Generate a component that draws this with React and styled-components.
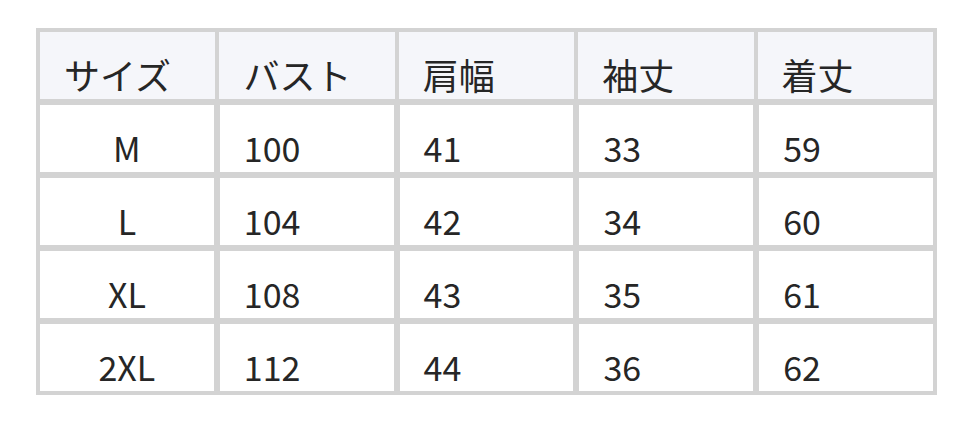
import React from "react";
import styled, { createGlobalStyle } from "styled-components";

const Global = createGlobalStyle`
  html, body { margin: 0; padding: 0; background: #ffffff; }
  body { font-family: "Noto Sans CJK JP", "Noto Sans", sans-serif; }
`;

const Page = styled.div`
  padding: 28px 0 0 36px;
`;

const Table = styled.div`
  width: 901px;
  box-sizing: border-box;
  background: #d3d3d3;
  padding: 4px;
  display: flex;
  flex-direction: column;
  gap: 6px;
`;

const Row = styled.div`
  display: grid;
  grid-template-columns: repeat(5, 1fr);
  gap: ${(p) => (p.$head ? "4px" : "6px")};
  height: 67px;
`;

const Cell = styled.div`
  background: ${(p) => (p.$head ? "#f5f6fa" : "#ffffff")};
  display: flex;
  align-items: flex-end;
  justify-content: ${(p) => (p.$center ? "center" : "flex-start")};
  padding: 0 24px;
  font-size: ${(p) => (p.$head ? "36px" : "34px")};
  line-height: ${(p) => (p.$head ? "50px" : "49px")};
  color: #262626;
  font-family: "Noto Sans CJK JP", "Noto Sans", sans-serif;
  white-space: nowrap;
`;

const head = ["サイズ", "バスト", "肩幅", "袖丈", "着丈"];
const rows = [
  ["M", "100", "41", "33", "59"],
  ["L", "104", "42", "34", "60"],
  ["XL", "108", "43", "35", "61"],
  ["2XL", "112", "44", "36", "62"],
];

export default function App() {
  return (
    <>
      <Global />
      <Page>
        <Table>
          <Row $head>
            {head.map((h) => (
              <Cell $head key={h}>{h}</Cell>
            ))}
          </Row>
          {rows.map((r) => (
            <Row key={r[0]}>
              {r.map((c, i) => (
                <Cell key={i} $center={i === 0}>{c}</Cell>
              ))}
            </Row>
          ))}
        </Table>
      </Page>
    </>
  );
}
